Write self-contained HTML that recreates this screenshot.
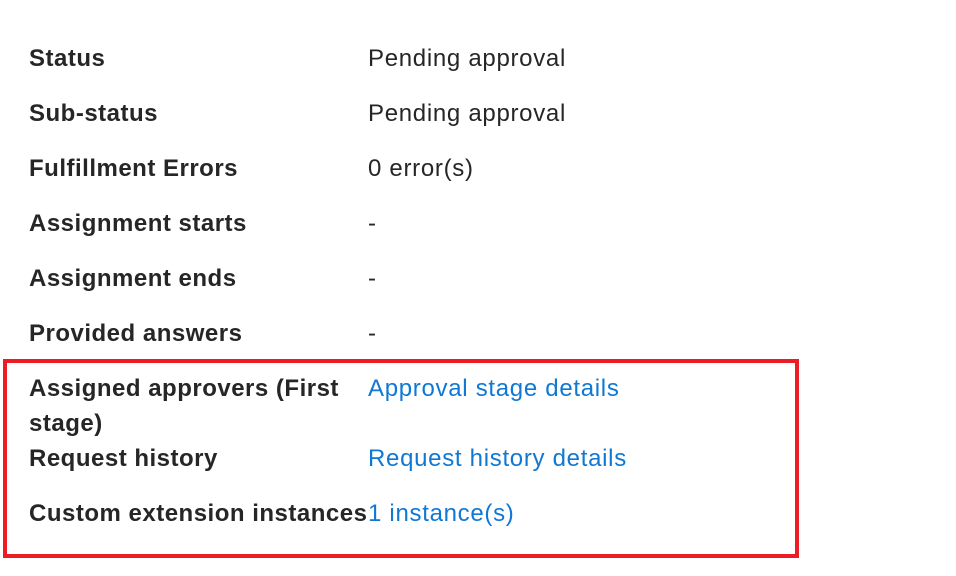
<!DOCTYPE html>
<html><head><meta charset="utf-8"><style>
html,body{margin:0;padding:0;background:#fff;width:956px;height:576px;overflow:hidden;position:relative;font-family:"Liberation Sans",Arial,sans-serif;font-size:24px;color:#262626}
.l,.v{position:absolute;line-height:35px;white-space:nowrap}
.l{left:29px;font-weight:bold;letter-spacing:0.5px}
.v{left:368px;letter-spacing:0.7px}
.a{color:#0f78d4}
.box{position:absolute;left:3px;top:359px;width:788px;height:191px;border:4px solid #ed1c24}
</style></head><body>
<div class="l" style="top:41px">Status</div><div class="v" style="top:41px">Pending approval</div>
<div class="l" style="top:96px">Sub-status</div><div class="v" style="top:96px">Pending approval</div>
<div class="l" style="top:151px">Fulfillment Errors</div><div class="v" style="top:151px">0 error(s)</div>
<div class="l" style="top:206px">Assignment starts</div><div class="v" style="top:206px">-</div>
<div class="l" style="top:261px">Assignment ends</div><div class="v" style="top:261px">-</div>
<div class="l" style="top:316px">Provided answers</div><div class="v" style="top:316px">-</div>
<div class="box"></div>
<div class="l" style="top:371px">Assigned approvers (First<br>stage)</div><div class="v a" style="top:371px">Approval stage details</div>
<div class="l" style="top:441px">Request history</div><div class="v a" style="top:441px">Request history details</div>
<div class="l" style="top:496px">Custom extension instances</div><div class="v a" style="top:496px">1 instance(s)</div>
</body></html>
